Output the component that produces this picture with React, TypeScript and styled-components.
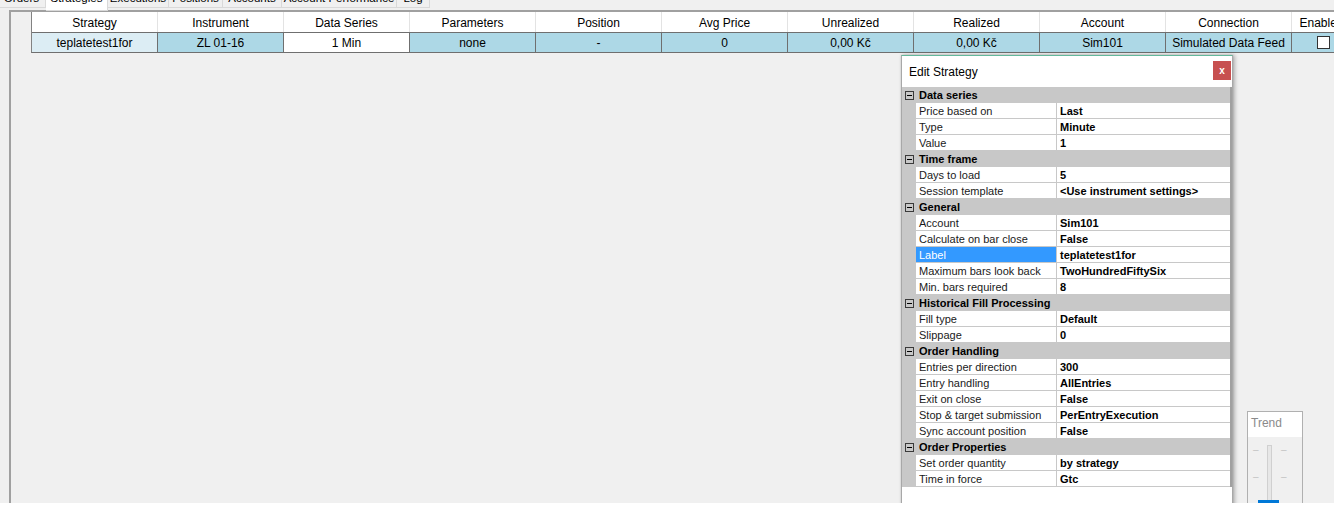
import styled, { createGlobalStyle } from "styled-components";

const GlobalStyle = createGlobalStyle`
  html, body {
    margin: 0;
    padding: 0;
    background: #ffffff;
    font-family: "Liberation Sans", Arial, sans-serif;
    overflow: hidden;
  }
`;

type Column = { title: string; value: string; width: number; tone: "blue" | "light" | "white"; check?: boolean };

const columns: Column[] = [
  { title: "Strategy", value: "teplatetest1for", width: 126, tone: "light" },
  { title: "Instrument", value: "ZL 01-16", width: 126, tone: "blue" },
  { title: "Data Series", value: "1 Min", width: 126, tone: "white" },
  { title: "Parameters", value: "none", width: 126, tone: "blue" },
  { title: "Position", value: "-", width: 126, tone: "blue" },
  { title: "Avg Price", value: "0", width: 126, tone: "blue" },
  { title: "Unrealized", value: "0,00 Kč", width: 126, tone: "blue" },
  { title: "Realized", value: "0,00 Kč", width: 126, tone: "blue" },
  { title: "Account", value: "Sim101", width: 126, tone: "blue" },
  { title: "Connection", value: "Simulated Data Feed", width: 126, tone: "blue" },
  { title: "Enabled", value: "", width: 60, tone: "blue", check: true },
];

const tabs = [
  { label: "Orders", width: 48 },
  { label: "Strategies", width: 62, active: true },
  { label: "Executions", width: 61 },
  { label: "Positions", width: 54 },
  { label: "Accounts", width: 59 },
  { label: "Account Performance", width: 115 },
  { label: "Log", width: 33 },
];

type Prop = { name: string; value: string; selected?: boolean };
type Category = { title: string; props: Prop[] };

const categories: Category[] = [
  {
    title: "Data series",
    props: [
      { name: "Price based on", value: "Last" },
      { name: "Type", value: "Minute" },
      { name: "Value", value: "1" },
    ],
  },
  {
    title: "Time frame",
    props: [
      { name: "Days to load", value: "5" },
      { name: "Session template", value: "<Use instrument settings>" },
    ],
  },
  {
    title: "General",
    props: [
      { name: "Account", value: "Sim101" },
      { name: "Calculate on bar close", value: "False" },
      { name: "Label", value: "teplatetest1for", selected: true },
      { name: "Maximum bars look back", value: "TwoHundredFiftySix" },
      { name: "Min. bars required", value: "8" },
    ],
  },
  {
    title: "Historical Fill Processing",
    props: [
      { name: "Fill type", value: "Default" },
      { name: "Slippage", value: "0" },
    ],
  },
  {
    title: "Order Handling",
    props: [
      { name: "Entries per direction", value: "300" },
      { name: "Entry handling", value: "AllEntries" },
      { name: "Exit on close", value: "False" },
      { name: "Stop & target submission", value: "PerEntryExecution" },
      { name: "Sync account position", value: "False" },
    ],
  },
  {
    title: "Order Properties",
    props: [
      { name: "Set order quantity", value: "by strategy" },
      { name: "Time in force", value: "Gtc" },
    ],
  },
];

const App = () => {
  return (
    <>
      <GlobalStyle />
      <Window>
        <TabStrip>
          {tabs.map((t) => (
            <Tab key={t.label} $width={t.width} $active={!!t.active}>
              {t.label}
            </Tab>
          ))}
        </TabStrip>
        <Panel>
          <StrategyGrid>
            {columns.map((c) => (
              <HeaderCell key={c.title}>{c.title}</HeaderCell>
            ))}
            {columns.map((c) => (
              <DataCell key={c.title + "-v"} $tone={c.tone}>
                {c.check ? <CheckBox /> : c.value}
              </DataCell>
            ))}
          </StrategyGrid>

          <Dialog>
            <TitleBar>
              <span>Edit Strategy</span>
              <CloseButton>x</CloseButton>
            </TitleBar>
            <PropertyGrid>
              {categories.map((cat) => (
                <CategoryBlock key={cat.title}>
                  <CategoryRow>
                    <Gutter>
                      <Toggle />
                    </Gutter>
                    <CategoryTitle>{cat.title}</CategoryTitle>
                  </CategoryRow>
                  {cat.props.map((p) => (
                    <PropRow key={p.name}>
                      <Gutter />
                      <PropName $selected={!!p.selected}>{p.name}</PropName>
                      <PropValue>{p.value}</PropValue>
                    </PropRow>
                  ))}
                </CategoryBlock>
              ))}
            </PropertyGrid>
          </Dialog>

          <TrendWidget>
            <TrendHead>Trend</TrendHead>
            <TrendBody>
              <Ticks>
                <span>–</span>
                <span>–</span>
              </Ticks>
              <Track />
              <Ticks>
                <span>–</span>
                <span>–</span>
              </Ticks>
              <Thumb />
            </TrendBody>
          </TrendWidget>
        </Panel>
      </Window>
    </>
  );
};

export default App;

const Window = styled.div`
  position: relative;
  height: 503px;
  background: #f0f0f0;
  overflow: hidden;
`;

const TabStrip = styled.div`
  display: flex;
  height: 10px;
  margin-left: -2px;
  overflow: visible;
`;

const Tab = styled.div<{ $width: number; $active: boolean }>`
  width: ${(p) => p.$width}px;
  height: ${(p) => (p.$active ? 24 : 21)}px;
  margin-top: -13px;
  box-sizing: border-box;
  border: 1px solid #d9d9d9;
  border-left: none;
  background: ${(p) => (p.$active ? "#ffffff" : "#f0f0f0")};
  font-size: 11.5px;
  line-height: 21px;
  text-align: center;
  color: #000;
  white-space: nowrap;
  position: relative;
  z-index: ${(p) => (p.$active ? 2 : 0)};
`;

const Panel = styled.div`
  position: relative;
  margin-left: 9px;
  height: 493px;
  border-top: 2px solid #a0a0a0;
  border-left: 2px solid #a0a0a0;
  background: #f0f0f0;
  box-sizing: border-box;
  z-index: 1;
`;

const StrategyGrid = styled.div`
  display: grid;
  grid-template-columns: repeat(10, 126px) 60px;
  grid-template-rows: 20px 20px;
  margin-left: 20px;
  width: max-content;
  border-left: 1px solid #828282;
  border-bottom: 1px solid #6f6f6f;
  font-size: 12px;
  color: #000;
`;

const HeaderCell = styled.div`
  background: #ffffff;
  border-right: 1px solid #e3e3e3;
  display: flex;
  align-items: center;
  justify-content: center;
  white-space: nowrap;
  padding-top: 1px;
`;

const toneColors = {
  blue: "#add8e6",
  light: "#dcedf4",
  white: "#ffffff",
};

const DataCell = styled.div<{ $tone: "blue" | "light" | "white" }>`
  background: ${(p) => toneColors[p.$tone]};
  border-right: 1px solid #6f6f6f;
  border-top: 1px solid #6f6f6f;
  display: flex;
  align-items: center;
  justify-content: center;
  white-space: nowrap;
`;

const CheckBox = styled.div`
  width: 11px;
  height: 11px;
  border: 1px solid #333;
  background: #fff;
  margin-left: 4px;
`;

const Dialog = styled.div`
  position: absolute;
  left: 890px;
  top: 43px;
  width: 330px;
  height: 470px;
  background: #ffffff;
  border: 1px solid #a8a8a8;
  border-top: 1px solid #62b89b;
  box-shadow: 2px 0 4px rgba(0, 0, 0, 0.25), 0 0 2px rgba(0, 0, 0, 0.15);
  display: flex;
  flex-direction: column;
`;

const TitleBar = styled.div`
  height: 31px;
  display: flex;
  align-items: center;
  justify-content: space-between;
  padding: 0 1px 0 7px;
  font-size: 12px;
  color: #000;
  box-sizing: border-box;
`;

const CloseButton = styled.div`
  width: 18px;
  height: 19px;
  background: #c75050;
  color: #fff;
  font-size: 10px;
  font-weight: bold;
  display: flex;
  align-items: center;
  justify-content: center;
  margin-bottom: 2px;
`;

const PropertyGrid = styled.div`
  width: 328px;
  display: flex;
  flex-direction: column;
  font-size: 11px;
  border-right: 2px solid #a0a0a0;
  background: #fff;
`;

const CategoryBlock = styled.div`
  display: flex;
  flex-direction: column;
`;

const CategoryRow = styled.div`
  height: 16px;
  display: flex;
  align-items: center;
  background: #c8c8c8;
`;

const Gutter = styled.div`
  width: 14px;
  height: 16px;
  flex: none;
  background: #c8c8c8;
  display: flex;
  align-items: center;
  justify-content: center;
`;

const Toggle = styled.div`
  width: 7px;
  height: 7px;
  border: 1px solid #3a3a3a;
  position: relative;
  margin-left: 1px;
  &::after {
    content: "";
    position: absolute;
    left: 1px;
    right: 1px;
    top: 3px;
    height: 1px;
    background: #000;
  }
`;

const CategoryTitle = styled.div`
  font-weight: bold;
  padding-left: 3px;
  color: #000;
`;

const PropRow = styled.div`
  height: 16px;
  display: flex;
`;

const PropName = styled.div<{ $selected: boolean }>`
  width: 141px;
  box-sizing: border-box;
  padding-left: 3px;
  line-height: 16px;
  border-bottom: 1px solid #c8c8c8;
  border-right: 1px solid #c8c8c8;
  background: ${(p) => (p.$selected ? "#3399ff" : "#ffffff")};
  color: ${(p) => (p.$selected ? "#ffffff" : "#1a1a1a")};
  white-space: nowrap;
`;

const PropValue = styled.div`
  flex: 1;
  box-sizing: border-box;
  padding-left: 3px;
  line-height: 16px;
  border-bottom: 1px solid #c8c8c8;
  font-weight: bold;
  color: #000;
  white-space: nowrap;
`;

const TrendWidget = styled.div`
  position: absolute;
  left: 1236px;
  top: 399px;
  width: 54px;
  height: 110px;
  border: 1px solid #b0b0b0;
  background: #f0f0f0;
  display: flex;
  flex-direction: column;
`;

const TrendHead = styled.div`
  flex: none;
  height: 25px;
  background: #fff;
  color: #8a8a8a;
  font-size: 12px;
  padding: 4px 0 0 3px;
  box-sizing: border-box;
`;

const TrendBody = styled.div`
  position: relative;
  flex: 1;
  display: flex;
  align-items: flex-start;
  gap: 9px;
  padding: 8px 0 0 5px;
`;

const Ticks = styled.div`
  width: 5px;
  display: flex;
  flex-direction: column;
  gap: 15px;
  color: #c4c4c4;
  font-size: 10px;
  line-height: 12px;
  margin-top: -1px;
`;

const Track = styled.div`
  width: 3px;
  height: 80px;
  border: 1px solid #d0d0d0;
  background: #e7e7e7;
`;

const Thumb = styled.div`
  position: absolute;
  left: 10px;
  top: 63px;
  width: 21px;
  height: 10px;
  background: #0078d7;
`;
